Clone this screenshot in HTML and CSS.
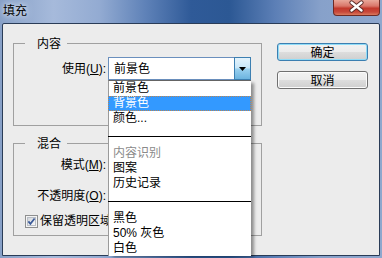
FILE: index.html
```html
<!DOCTYPE html>
<html lang="zh">
<head>
<meta charset="utf-8">
<title>填充</title>
<link rel="stylesheet" href="styles.css">
</head>
<body>
<div class="window">
  <div class="titlebar">
    <span class="title">填充</span>
    <button class="close" aria-label="关闭">
      <svg width="47" height="16" viewBox="0 0 47 16">
        <path d="M18.5 3.5 L28.5 11.5 M28.5 3.5 L18.5 11.5" stroke="#5a2a26" stroke-width="4.2" stroke-linecap="round"/>
        <path d="M18.5 3.5 L28.5 11.5 M28.5 3.5 L18.5 11.5" stroke="#ffffff" stroke-width="2.4" stroke-linecap="round"/>
      </svg>
    </button>
  </div>
  <div class="client">
    <div class="main">
      <div class="group g1">
        <div class="legend">内容</div>
        <div class="row r-use">
          <label class="lbl">使用(<u>U</u>):</label>
          <div class="combo open">
            <span class="value">前景色</span>
            <span class="drop"><svg width="7" height="4" viewBox="0 0 7 4"><path d="M0 0 H7 L3.5 4 Z" fill="#000"/></svg></span>
            <ul class="list">
              <li>前景色</li>
              <li class="sel">背景色</li>
              <li>颜色...</li>
              <li class="sep"></li>
              <li class="dis">内容识别</li>
              <li>图案</li>
              <li>历史记录</li>
              <li class="sep"></li>
              <li>黑色</li>
              <li>50% 灰色</li>
              <li>白色</li>
            </ul>
          </div>
        </div>
      </div>
      <div class="group g2">
        <div class="legend">混合</div>
        <div class="row r-mode">
          <label class="lbl">模式(<u>M</u>):</label>
          <div class="combo"></div>
        </div>
        <div class="row r-opacity">
          <label class="lbl">不透明度(<u>O</u>):</label>
          <div class="field"></div>
        </div>
        <div class="row r-check">
          <span class="checkbox">
            <svg width="13" height="13" viewBox="0 0 13 13">
              <defs>
                <linearGradient id="cbg" x1="0" y1="0" x2="1" y2="1">
                  <stop offset="0" stop-color="#cfd3d8"/>
                  <stop offset="1" stop-color="#fbfbfb"/>
                </linearGradient>
              </defs>
              <rect x="0.5" y="0.5" width="12" height="12" fill="#f4f4f4" stroke="#8e8f8f"/>
              <rect x="2.5" y="2.5" width="8" height="8" fill="url(#cbg)" stroke="#b9bec6"/>
              <path d="M3.4 6.4 L5.4 8.8 L9.6 3.4" fill="none" stroke="#3b5a99" stroke-width="1.7"/>
            </svg>
          </span>
          <span class="cblabel">保留透明区域</span>
        </div>
      </div>
    </div>
    <div class="buttons">
      <button class="btn default">确定</button>
      <button class="btn">取消</button>
    </div>
  </div>
</div>
</body>
</html>
```
FILE: styles.css
```css
* { box-sizing: border-box; }
html, body { margin: 0; padding: 0; }
body {
  width: 382px;
  height: 258px;
  overflow: hidden;
  font-family: "Liberation Sans", "Noto Sans CJK SC", sans-serif;
  font-size: 12px;
  color: #000;
  background: #4a6ea5;
}
.window {
  width: 382px;
  height: 258px;
  display: flex;
  flex-direction: column;
  padding: 0 2px 2px 2px;
  overflow: hidden;
  background: linear-gradient(90deg, #87a0c7 0%, #a6badb 14%, #93abd2 26%, #5f82b8 38%, #2f5a98 50%, #2c5894 60%, #5c7fb6 72%, #87a1ca 84%, #8ea7cd 100%);
}
.titlebar {
  height: 23px;
  flex: none;
  display: flex;
  justify-content: space-between;
  align-items: flex-start;
}
.title {
  margin: 3px 0 0 1px;
  line-height: 14px;
  font-family: "Noto Sans CJK SC", sans-serif;
  color: #000;
  text-shadow: 0 0 4px #dfe8f5, 0 0 8px #dfe8f5;
}
.close {
  width: 47px;
  height: 16px;
  margin: 0;
  padding: 0;
  border: 1px solid #6d2a24;
  border-top: none;
  border-radius: 0 0 4px 4px;
  background: linear-gradient(#e9a89a 0%, #d9776a 40%, #c2392c 55%, #c8483a 80%, #d97a5e 100%);
  display: block;
}
.close svg { display: block; margin: -1px 0 0 -1px; }
.client {
  flex: 1;
  display: flex;
  align-items: flex-start;
  background: #ececec;
  border: 1px solid #2a3c57;
  border-radius: 2px 2px 0 0;
  padding: 19px 0 0 10px;
}
.main { width: 249px; display: flex; flex-direction: column; }
.group {
  border: 1px solid #a0a0a0;
  width: 249px;
}
.g1 { height: 83px; }
.g2 { height: 93px; margin-top: 17px; }
.legend {
  width: fit-content;
  margin: -8px 0 0 11px;
  padding: 0 6px 0 12px;
  background: #ececec;
  line-height: 14px;
  height: 14px;
  font-family: "Noto Sans CJK SC", sans-serif;
}
.row { display: flex; align-items: center; }
.lbl {
  width: 94px;
  padding-right: 2px;
  text-align: right;
  line-height: 14px;
  white-space: nowrap;
}
.r-use { margin-top: 7px; height: 23px; }
.r-mode { margin-top: 4px; height: 22px; }
.r-opacity { margin-top: 9px; height: 22px; }
.r-check { margin-top: 3px; height: 22px; padding-left: 11px; gap: 2px; }
.combo {
  position: relative;
  width: 143px;
  height: 23px;
  border: 1px solid #6a8fbd;
  background: #fff;
  display: flex;
  align-items: center;
}
.value { flex: 1; padding-left: 5px; line-height: 14px; }
.drop {
  width: 17px;
  align-self: stretch;
  margin: -1px -1px -1px 0;
  border: 1px solid #3c7fb1;
  background: linear-gradient(#e4f3fc 0%, #c9e7f8 45%, #97cfee 55%, #6cb4df 100%);
  display: flex;
  align-items: center;
  justify-content: center;
}
.drop svg { display: block; }
.list {
  position: absolute;
  z-index: 10;
  left: -1px;
  top: calc(100% + 1px);
  width: 143px;
  margin: 0;
  padding: 0;
  list-style: none;
  background: #fff;
  border-top: 1px solid #646464;
  border-left: 1px solid #9a9a9a;
  box-shadow: 4px 2px 3px -1px rgba(0, 0, 0, 0.4);
}
.list li {
  height: 15px;
  line-height: 15px;
  padding-left: 4px;
  white-space: nowrap;
}
.list li.sel {
  margin-left: -1px;
  padding-left: 5px;
  background: #3399ff;
  color: #fff;
  outline: 1px dotted #b98552;
  outline-offset: -1px;
}
.list li.dis { color: #8a8a8a; }
.list li.sep {
  height: 20px;
  padding: 10px 0 0 0;
}
.list li.sep::before {
  content: "";
  display: block;
  height: 1px;
  margin-left: -1px;
  background: #000;
}
.field {
  width: 50px;
  height: 21px;
  border: 1px solid #abadb3;
  background: #fff;
}
.checkbox { width: 13px; height: 13px; display: block; }
.checkbox svg { display: block; }
.cblabel { line-height: 14px; white-space: nowrap; }
.buttons {
  margin-left: 15px;
  display: flex;
  flex-direction: column;
  gap: 10px;
}
.btn {
  width: 91px;
  height: 18px;
  padding: 0;
  margin: 0;
  font-family: "Noto Sans CJK SC", sans-serif;
  font-size: 12px;
  line-height: 14px;
  color: #000;
  border: 1px solid #707070;
  border-radius: 3px;
  background: linear-gradient(#f2f2f2 0%, #ebebeb 50%, #dddddd 51%, #cfcfcf 100%);
  box-shadow: inset 0 0 0 1px #fbfbfb;
}
.btn.default {
  border-color: #3c7fb1;
  box-shadow: inset 0 0 0 1px #8fdcf7;
}
```
